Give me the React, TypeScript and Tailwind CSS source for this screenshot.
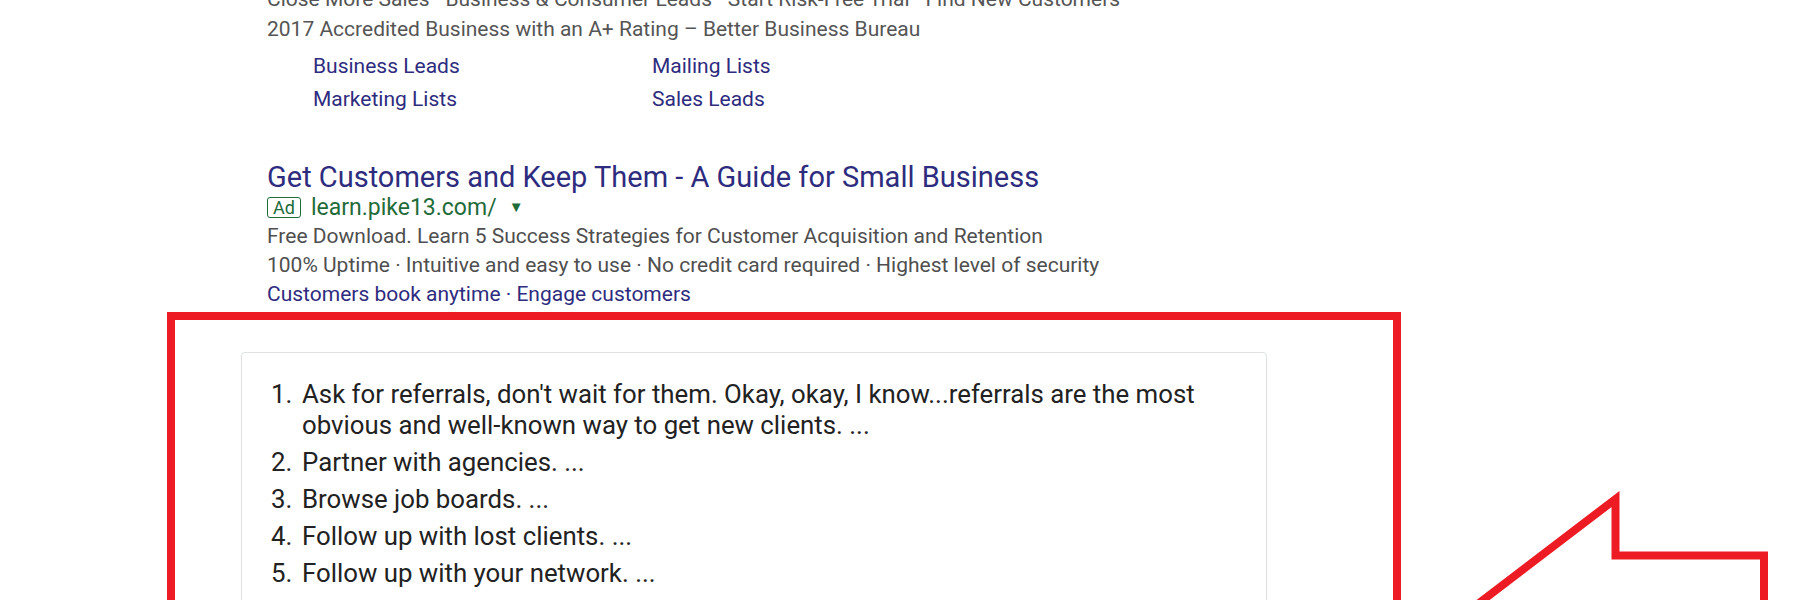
import React from "react";

const items: string[] = [
  "Ask for referrals, don't wait for them. Okay, okay, I know...referrals are the most obvious and well-known way to get new clients. ...",
  "Partner with agencies. ...",
  "Browse job boards. ...",
  "Follow up with lost clients. ...",
  "Follow up with your network. ...",
  "Improve your website. ...",
  "Start a blog. ...",
];

export default function App() {
  return (
    <div className="relative h-[600px] overflow-hidden bg-white font-['Roboto',sans-serif]">
      <div className="-mt-[15px] pl-[267px]">
        <p className="whitespace-nowrap text-[21px] leading-[29px] text-[#555555]">
          Close More Sales · Business &amp; Consumer Leads · Start Risk-Free Trial · Find New Customers
        </p>
        <p className="mt-[1px] whitespace-nowrap text-[21px] leading-[29px] text-[#555555]">
          2017 Accredited Business with an A+ Rating – Better Business Bureau
        </p>
        <div className="ml-[46px] mt-[6px] grid grid-cols-[339px_auto] text-[21px] leading-[33px] text-[#2e2c7e]">
          <span>Business Leads</span>
          <span>Mailing Lists</span>
          <span>Marketing Lists</span>
          <span>Sales Leads</span>
        </div>
        <h3 className="mt-[46px] whitespace-nowrap text-[29px] leading-[31px] text-[#2e2c7e]">
          Get Customers and Keep Them - A Guide for Small Business
        </h3>
        <div className="flex h-[29px] items-center">
          <span className="mr-[10px] flex h-[21px] items-center rounded-[3px] border-[1.5px] border-[#1f6b3a] px-[5px] text-[18px] leading-none text-[#1f6b3a]">
            Ad
          </span>
          <span className="text-[23px] leading-[29px] text-[#1f6b3a]">learn.pike13.com/</span>
          <span className="ml-[12px] text-[15px] leading-none text-[#1f6b3a]">▼</span>
        </div>
        <p className="whitespace-nowrap text-[21px] leading-[29px] text-[#4f4f4f]">
          Free Download. Learn 5 Success Strategies for Customer Acquisition and Retention
        </p>
        <p className="whitespace-nowrap text-[21px] leading-[29px] text-[#4f4f4f]">
          100% Uptime · Intuitive and easy to use · No credit card required · Highest level of security
        </p>
        <p className="whitespace-nowrap text-[21px] leading-[28px] text-[#2e2c7e]">
          Customers book anytime · Engage customers
        </p>
      </div>

      <div className="ml-[167px] mt-[4px] h-[600px] w-[1234px] border-[8px] border-[#ed1c24] pl-[66px] pt-[32px]">
        <div className="w-[1026px] rounded-[4px] border border-[#dfe1e5] bg-white pb-[30px] pl-[29px] pr-[28px] pt-[26px] shadow-[0_1px_2px_rgba(0,0,0,0.06)]">
          <ol className="flex flex-col gap-[6px] text-[25.8px] leading-[31px] text-[#222222]">
            {items.map((t, i) => (
              <li key={i} className="flex">
                <span className="w-[31px] shrink-0">{i + 1}.</span>
                <span className="w-[920px]">{t}</span>
              </li>
            ))}
          </ol>
        </div>
      </div>

      <svg
        className="pointer-events-none absolute left-0 top-0"
        width="1800"
        height="600"
        viewBox="0 0 1800 600"
      >
        <polyline
          points="1470,610 1615.5,499 1615.5,555.5 1764,555.5 1764,610"
          fill="none"
          stroke="#ed1c24"
          strokeWidth="8"
          strokeLinejoin="miter"
          strokeMiterlimit="10"
        />
      </svg>
    </div>
  );
}
